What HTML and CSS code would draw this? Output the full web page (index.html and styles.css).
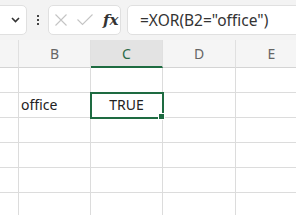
FILE: index.html
```html
<!DOCTYPE html>
<html lang="en">
<head>
    <meta charset="UTF-8">
    <title>XOR</title>
    <link rel="stylesheet" href="styles.css">
</head>
<body>
    <div class="toolbar">
        <div class="name-box">
            <svg class="chevron" width="9" height="6" viewBox="0 0 9 6"><path d="M1 1 L4.5 4.5 L8 1" fill="none" stroke="#333" stroke-width="1.6"/></svg>
        </div>
        <div class="dots"><span></span><span></span><span></span></div>
        <div class="fx-box">
            <svg class="icon-x" width="12" height="12" viewBox="0 0 12 12"><path d="M0.5 0.5 L11.5 11.5 M11.5 0.5 L0.5 11.5" stroke="#c4c4c4" stroke-width="1.1"/></svg>
            <svg class="icon-check" width="16" height="12" viewBox="0 0 16 12"><path d="M0.5 5.5 L5.5 10.5 L15.5 0.5" fill="none" stroke="#c4c4c4" stroke-width="1.1"/></svg>
            <span class="fx">fx</span>
        </div>
        <div class="formula-box">=XOR(B2="office")</div>
    </div>

    <div class="sheet">
        <div class="col-head"></div>
        <div class="col-head">B</div>
        <div class="col-head selected">C</div>
        <div class="col-head">D</div>
        <div class="col-head">E</div>

        <div class="cell"></div><div class="cell"></div><div class="cell"></div><div class="cell"></div><div class="cell"></div>

        <div class="cell"></div>
        <div class="cell">office</div>
        <div class="cell active">TRUE</div>
        <div class="cell"></div>
        <div class="cell"></div>

        <div class="cell"></div><div class="cell"></div><div class="cell"></div><div class="cell"></div><div class="cell"></div>
        <div class="cell"></div><div class="cell"></div><div class="cell"></div><div class="cell"></div><div class="cell"></div>
        <div class="cell"></div><div class="cell"></div><div class="cell"></div><div class="cell"></div><div class="cell"></div>
        <div class="cell"></div><div class="cell"></div><div class="cell"></div><div class="cell"></div><div class="cell"></div>
    </div>
</body>
</html>
```

FILE: styles.css
```css
body {
    margin: 0;
    padding: 0;
    background-color: white;
    font-family: 'Noto Sans', 'Liberation Sans', sans-serif;
    color: #222;
    overflow: hidden;
}
.toolbar {
    height: 40px;
    background-color: #f3f3f3;
    display: flex;
    align-items: center;
}
.name-box {
    width: 33px;
    height: 30px;
    margin-left: -6px;
    box-sizing: border-box;
    background-color: white;
    border: 1px solid #e0e0e0;
    border-radius: 5px;
    display: flex;
    align-items: center;
    justify-content: flex-end;
    padding-right: 6px;
}
.dots {
    width: 21px;
    display: flex;
    flex-direction: column;
    align-items: center;
    gap: 2px;
}
.dots span {
    width: 2px;
    height: 2px;
    background-color: #444;
}
.fx-box {
    width: 73px;
    height: 30px;
    box-sizing: border-box;
    background-color: white;
    border: 1px solid #e0e0e0;
    border-radius: 5px;
    display: flex;
    align-items: center;
    padding-left: 6px;
}
.icon-check {
    margin-left: 10px;
}
.fx {
    font-family: 'DejaVu Serif', 'Liberation Serif', serif;
    font-style: italic;
    font-weight: bold;
    font-size: 15px;
    color: #333;
    margin-left: 10px;
}
.formula-box {
    flex: 1;
    height: 30px;
    margin-left: 6px;
    margin-right: -10px;
    box-sizing: border-box;
    background-color: white;
    border: 1px solid #e0e0e0;
    border-radius: 5px;
    padding-left: 12px;
    font-size: 15.5px;
    line-height: 28px;
    color: #333;
}
.sheet {
    display: grid;
    grid-template-columns: 19px 72px 72px 73px 72px;
    grid-template-rows: 28px repeat(6, 25px);
}
.col-head {
    background-color: #f5f5f5;
    border-right: 1px solid #e0e0e0;
    border-bottom: 1px solid #d4d4d4;
    color: #666;
    font-size: 14px;
    text-align: center;
    line-height: 27px;
}
.col-head.selected {
    background-color: #e3e3e3;
    border-bottom: 2px solid #1e6b41;
    color: #2a6a48;
}
.cell {
    border-right: 1px solid #dcdcdc;
    border-bottom: 1px solid #dcdcdc;
    font-size: 14px;
    line-height: 24px;
    padding-left: 2px;
    color: #222;
}
.cell.active {
    position: relative;
    text-align: center;
    padding-left: 0;
    outline: 2px solid #1e6b41;
    outline-offset: -1px;
}
.cell.active::after {
    content: '';
    position: absolute;
    right: -3px;
    bottom: -3px;
    width: 5px;
    height: 5px;
    background-color: #1e6b41;
    border: 1px solid white;
}
```
